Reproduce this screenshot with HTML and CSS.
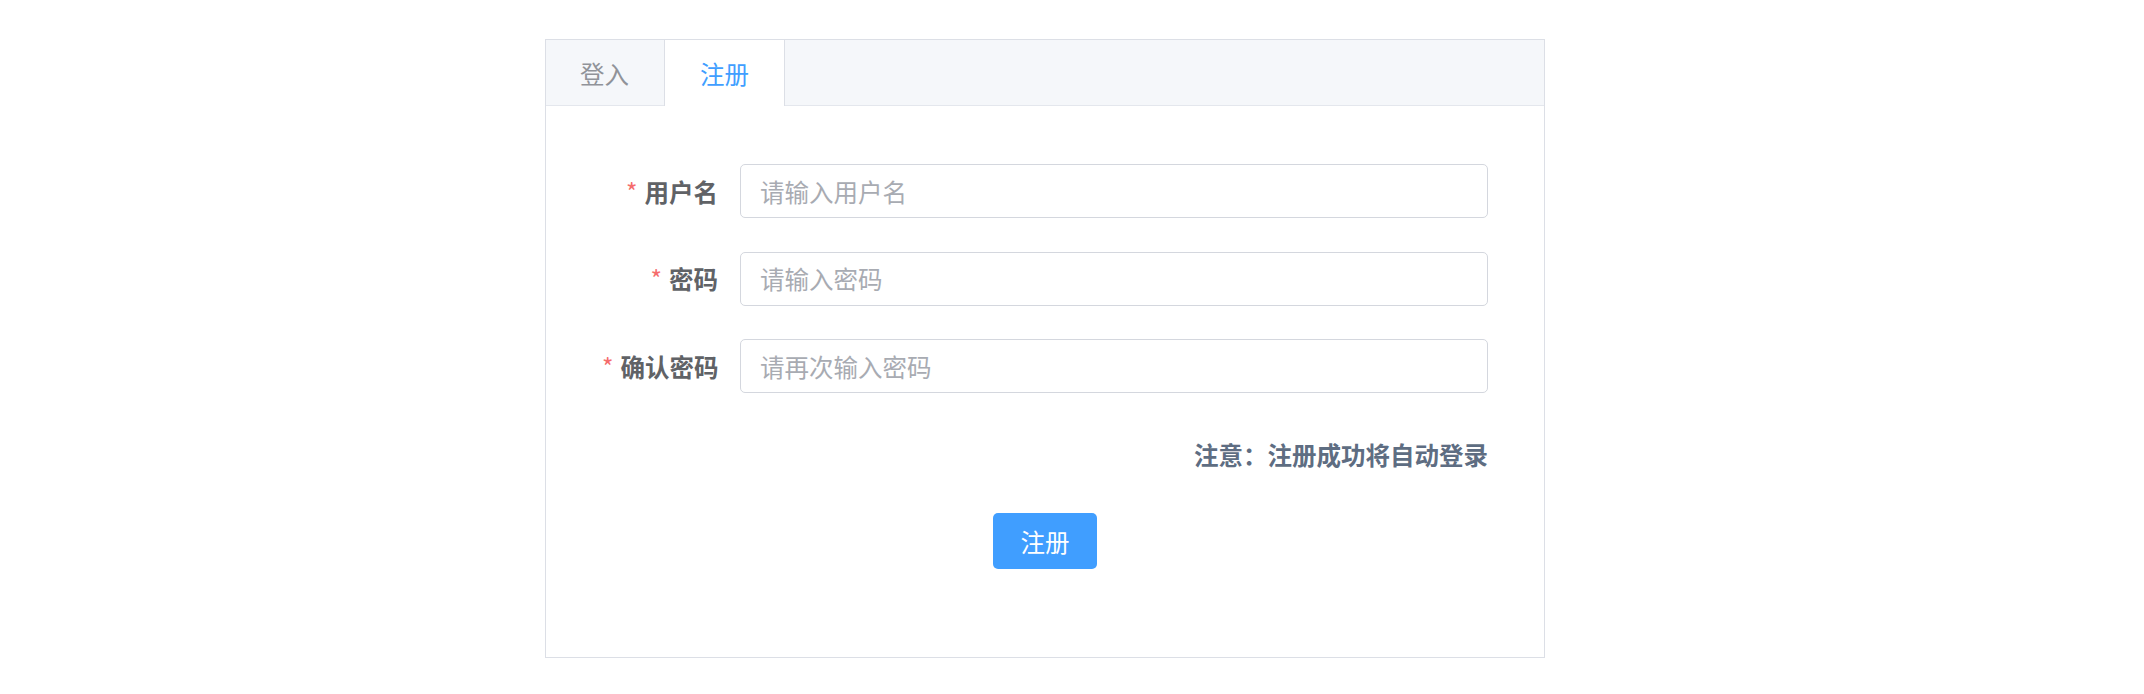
FILE: index.html
```html
<!DOCTYPE html>
<html lang="zh-CN">
<head>
<meta charset="utf-8">
<title>注册</title>
<link rel="stylesheet" href="styles.css">
</head>
<body>
<div class="page">
  <div class="card">
    <div class="tabs-header">
      <div class="tab">登入</div>
      <div class="tab active">注册</div>
    </div>
    <div class="tabs-body">
      <form class="form">
        <div class="form-item">
          <label class="label"><span class="star">*</span>用户名</label>
          <input class="input" type="text" placeholder="请输入用户名">
        </div>
        <div class="form-item">
          <label class="label"><span class="star">*</span>密码</label>
          <input class="input" type="password" placeholder="请输入密码">
        </div>
        <div class="form-item">
          <label class="label"><span class="star">*</span>确认密码</label>
          <input class="input" type="password" placeholder="请再次输入密码">
        </div>
        <div class="note">注意：注册成功将自动登录</div>
        <div class="actions">
          <button class="btn" type="button">注册</button>
        </div>
      </form>
    </div>
  </div>
</div>
</body>
</html>
```
FILE: styles.css
```css
* { box-sizing: border-box; }
html, body { margin: 0; padding: 0; background: #fff; }
body {
  font-family: "Noto Sans CJK SC", "Noto Sans", "Liberation Sans", sans-serif;
}
.page {
  padding: 39px 0 0 545px;
}
.card {
  width: 1000px;
  height: 619px;
  border: 1px solid #DCDFE6;
  background: #fff;
}
.tabs-header {
  display: flex;
  height: 66px;
  background: #F5F7FA;
  border-bottom: 1px solid #E4E7ED;
}
.tab {
  width: 119px;
  height: 66px;
  display: flex;
  align-items: center;
  justify-content: center;
  font-size: 24.5px;
  color: #909399;
  border-right: 1px solid transparent;
  border-left: 1px solid transparent;
}
.tab:first-child { border-left: none; width: 118px; }
.tab.active {
  background: #fff;
  color: #409EFF;
  border-left-color: #DCDFE6;
  border-right-color: #DCDFE6;
  width: 121px;
  margin-bottom: -1px;
}
.tabs-body {
  padding: 58px 56px 0 56px;
}
.form-item {
  display: flex;
  align-items: center;
  height: 54px;
  margin-bottom: 33.5px;
}
.form-item:nth-child(3) { margin-bottom: 0; }
.label {
  width: 138px;
  padding-right: 22px;
  text-align: right;
  font-size: 24.5px;
  font-weight: 700;
  color: #606266;
  white-space: nowrap;
}
.star {
  color: #F56C6C;
  font-weight: 400;
  margin-right: 7px;
}
.input {
  flex: 1;
  height: 54px;
  border: 1px solid #D4D7DE;
  border-radius: 5px;
  padding: 0 19px;
  font-family: inherit;
  font-size: 24.5px;
  color: #606266;
  outline: none;
  background: #fff;
}
.input::placeholder { color: #A8ABB2; }
.note {
  margin-top: 45px;
  text-align: right;
  font-size: 24.5px;
  line-height: 34px;
  font-weight: 700;
  color: #5E6D82;
}
.actions {
  display: flex;
  justify-content: center;
  margin: 41px -56px 0 -56px;
}
.btn {
  width: 104px;
  height: 56px;
  border: none;
  border-radius: 5px;
  background: #409EFF;
  color: #fff;
  font-family: inherit;
  font-size: 24.5px;
  padding: 0;
}
```
